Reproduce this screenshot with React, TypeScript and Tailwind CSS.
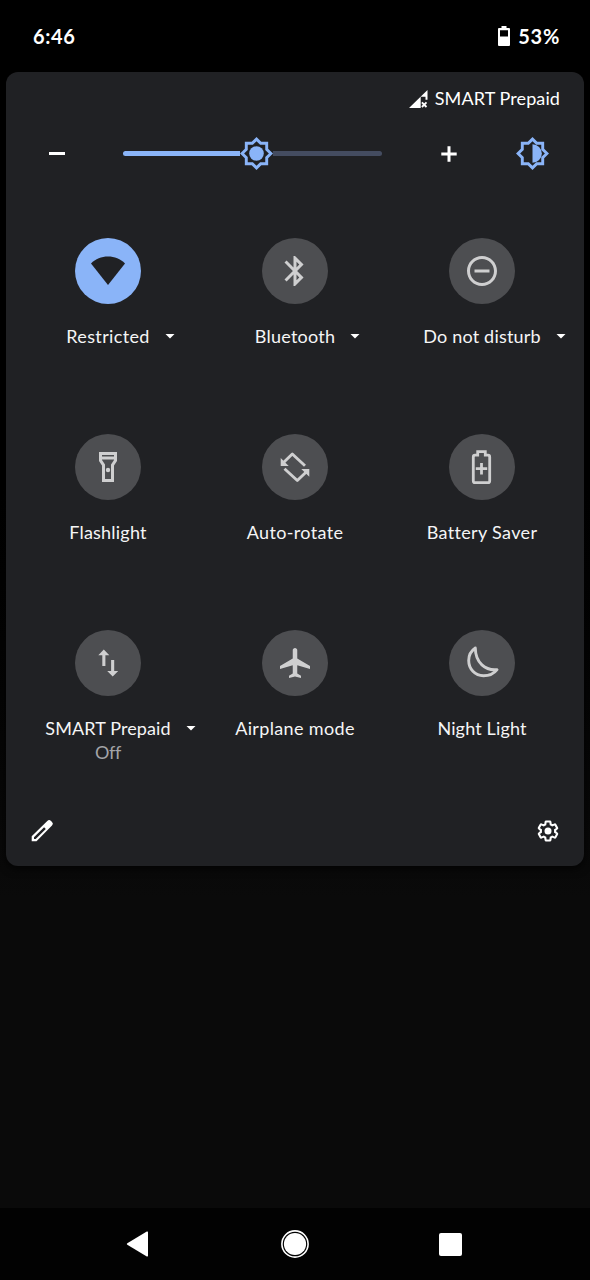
import type { ReactNode } from "react";

const SUN =
  "M20 8.69V4h-4.69L12 .69 8.69 4H4v4.69L.69 12 4 15.31V20h4.69L12 23.31 15.31 20H20v-4.69L23.31 12 20 8.69zm-2 5.79V18h-3.52L12 20.48 9.52 18H6v-3.52L3.52 12 6 9.52V6h3.52L12 3.52 14.48 6H18v3.52L20.48 12 18 14.48z";

const GEAR =
  "M19.43 12.98c.04-.32.07-.64.07-.98 0-.34-.03-.66-.07-.98l2.11-1.65c.19-.15.24-.42.12-.64l-2-3.46a.5.5 0 0 0-.61-.22l-2.49 1c-.52-.4-1.08-.73-1.69-.98l-.38-2.65A.488.488 0 0 0 14 2h-4c-.25 0-.46.18-.49.42l-.38 2.65c-.61.25-1.17.59-1.69.98l-2.49-1a.566.566 0 0 0-.18-.03c-.17 0-.34.09-.43.25l-2 3.46c-.13.22-.07.49.12.64l2.11 1.65c-.04.32-.07.65-.07.98 0 .33.03.66.07.98l-2.11 1.65c-.19.15-.24.42-.12.64l2 3.46a.5.5 0 0 0 .61.22l2.49-1c.52.4 1.08.73 1.69.98l.38 2.65c.03.24.24.42.49.42h4c.25 0 .46-.18.49-.42l.38-2.65c.61-.25 1.17-.59 1.69-.98l2.49 1c.06.02.12.03.18.03.17 0 .34-.09.43-.25l2-3.46c.12-.22.07-.49-.12-.64l-2.11-1.65z";

const material = (d: string) => (
  <path transform="translate(15 15) scale(1.5)" fillRule="evenodd" d={d} />
);

type Tile = {
  label: string;
  tracking: string;
  icon: ReactNode;
  menu?: boolean;
  active?: boolean;
  sub?: string;
};

const tiles: Tile[] = [
  {
    label: "Restricted",
    tracking: "tracking-[0.35px]",
    menu: true,
    active: true,
    icon: <path d="M33 47 16 25.5C20.5 21 26.5 18.6 33 18.6S45.5 21 50 25.5z" />,
  },
  {
    label: "Bluetooth",
    tracking: "tracking-[0.25px]",
    menu: true,
    icon: material(
      "M17.71 7.71L12 2h-1v7.59L6.41 5 5 6.41 10.59 12 5 17.59 6.41 19 11 14.41V22h1l5.71-5.71-4.3-4.29 4.3-4.29zM13 5.83l1.88 1.88L13 9.59V5.83zm1.88 10.46L13 18.17v-3.76l1.88 1.88z"
    ),
  },
  {
    label: "Do not disturb",
    tracking: "tracking-[0.2px]",
    menu: true,
    icon: material(
      "M12 2C6.48 2 2 6.48 2 12s4.48 10 10 10 10-4.48 10-10S17.52 2 12 2zm0 18c-4.41 0-8-3.59-8-8s3.59-8 8-8 8 3.59 8 8-3.59 8-8 8zM7 11h10v2H7z"
    ),
  },
  {
    label: "Flashlight",
    tracking: "tracking-[0.2px]",
    icon: (
      <>
        {material("M18 2H6v6l2 3v11h8V11l2-3V2zM16 4v1H8V4h8zM14 10.4V20h-4v-9.6L8 7.39V7h8v.39L14 10.4z")}
        <circle cx="33" cy="36" r="2.2" />
      </>
    ),
  },
  {
    label: "Auto-rotate",
    tracking: "tracking-[0.35px]",
    icon: (
      <>
        <path
          d="M43 31.800 30.300 20 21.500 28.500M22.500 34.800 35.300 46.500 44.500 37.800"
          fill="none"
          stroke="currentColor"
          strokeWidth="2.9"
          strokeLinejoin="round"
        />
        <path d="M18.7 24v7.9h8zM47.3 42.8V35h-8z" />
      </>
    ),
  },
  {
    label: "Battery Saver",
    tracking: "tracking-[0.35px]",
    icon: (
      <path
        d="M28.7 21.2v-3.5h7.6v3.5h2.7a1.7 1.7 0 0 1 1.7 1.7v24a1.7 1.7 0 0 1-1.7 1.7h-13a1.7 1.7 0 0 1-1.7-1.7v-24a1.7 1.7 0 0 1 1.7-1.7zM32.5 29v11.4M26.8 34.7h11.4"
        fill="none"
        stroke="currentColor"
        strokeWidth="2.8"
      />
    ),
  },
  {
    label: "SMART Prepaid",
    tracking: "tracking-[0.1px]",
    menu: true,
    sub: "Off",
    icon: (
      <path d="M28.8 19.6 34.3 25.2H30.4V36H27.3V25.2H23.3zM37.7 46.4 32.2 40.9H36.1V30H39.2V40.9H43.2z" />
    ),
  },
  {
    label: "Airplane mode",
    tracking: "tracking-[0.35px]",
    icon: material(
      "M22 16v-2l-8.5-5V3.5c0-.83-.67-1.5-1.5-1.5s-1.5.67-1.5 1.5V9L2 14v2l8.5-2.5V19L8 20.5V22l4-1 4 1v-1.5L13.5 19v-5.5L22 16z"
    ),
  },
  {
    label: "Night Light",
    tracking: "tracking-[0.15px]",
    icon: (
      <path
        d="M26.3 18C21.8 21 19.700 25.8 19.700 30.6C19.700 39 26 45.8 34.500 45.8C40 45.8 45 43.500 48 39.6C36.500 40.8 26.500 33 26.3 18z"
        fill="none"
        stroke="currentColor"
        strokeWidth="2.9"
        strokeLinejoin="round"
      />
    ),
  },
];

function QuickTile({ tile }: { tile: Tile }) {
  return (
    <div className="flex h-[196px] flex-col items-center">
      <svg
        viewBox="0 0 66 66"
        fill="currentColor"
        className={
          tile.active
            ? "size-[66px] rounded-full bg-[#8ab4f8] text-[#202124]"
            : "size-[66px] rounded-full bg-[#4d4e51] text-[#cfcfd0]"
        }
      >
        {tile.icon}
      </svg>
      <div className="mt-[20px] grid w-full grid-cols-[1fr_auto_1fr] items-center leading-6">
        <span />
        <span className={`whitespace-nowrap text-[18px] text-[#f5f5f6] ${tile.tracking}`}>{tile.label}</span>
        {tile.menu && (
          <svg viewBox="0 0 10 5" className="ml-[15px] mt-px h-[5px] w-[10px] fill-white">
            <path d="M.5 0h9L5 4.6z" />
          </svg>
        )}
      </div>
      {tile.sub && (
        <span className="text-[18px] leading-6 tracking-[-0.4px] text-[#a3a4a7]">{tile.sub}</span>
      )}
    </div>
  );
}

export default function App() {
  return (
    <div className="flex h-[1280px] w-[590px] flex-col overflow-hidden bg-linear-to-b from-black from-10% to-[#0a0a0a] to-70% font-['Lato',sans-serif] text-white">
      <header className="flex h-[72px] shrink-0 items-center justify-between pl-[33px] pr-[30px] text-[20px] font-bold">
        <span className="tracking-[0.6px]">6:46</span>
        <div className="flex items-center gap-[8px]">
          <svg viewBox="0 0 12 20" className="h-5 w-3 fill-white">
            <path
              fillRule="evenodd"
              d="M3.5 0h5v2H11a1 1 0 0 1 1 1v16a1 1 0 0 1-1 1H1a1 1 0 0 1-1-1V3a1 1 0 0 1 1-1h2.5zM2 4.3v6.3h8V4.3z"
            />
          </svg>
          <span className="tracking-[0.7px]">53%</span>
        </div>
      </header>

      <main className="mx-1.5 flex h-[794px] shrink-0 flex-col rounded-xl bg-[#202124] shadow-[0_3px_8px_rgba(0,0,0,0.7)]">
        <div className="flex h-[53px] items-center justify-end gap-[7px] pr-[24px] text-[18px]">
          <svg viewBox="0 0 19 18" className="h-[18px] w-[19px] fill-white">
            <path d="M18.5 0v9.8h-2V6.8h-4.8V18H0z" />
            <path d="M12.9 12.3l4.6 4.7M17.5 12.3l-4.6 4.7" stroke="white" strokeWidth="1.8" />
          </svg>
          <span className="tracking-[0.1px]">SMART Prepaid</span>
        </div>

        <div className="flex h-[57px] items-center pl-[43px]">
          <div className="h-[3px] w-4 bg-white" />
          <div className="ml-[58px] flex w-[259px] items-center">
            <div className="h-[5px] w-[117px] rounded-l-full bg-[#8ab4f8]" />
            <svg viewBox="0 0 24 24" className="-mx-px size-[35px] shrink-0 fill-[#8ab4f8]">
              <path d={SUN} />
              <circle cx="12" cy="12" r="5" />
            </svg>
            <div className="h-[5px] flex-1 rounded-r-full bg-[#444c60]" />
          </div>
          <svg viewBox="0 0 16 16" className="ml-[58.5px] size-4">
            <path d="M8 .3v15.4M.3 8h15.4" stroke="white" strokeWidth="3" />
          </svg>
          <svg viewBox="0 0 24 24" className="ml-[58.5px] size-[35px] fill-[#8ab4f8]">
            <path d={SUN} />
            <path d="M12 5.6a6.4 6.4 0 0 1 0 12.8z" />
          </svg>
        </div>

        <section className="mt-[56px] grid w-[569.5px] grid-cols-[repeat(3,187px)] pl-[8.5px]">
          {tiles.map((tile) => (
            <QuickTile key={tile.label} tile={tile} />
          ))}
        </section>

        <footer className="mt-[-7px] flex items-center justify-between pl-[24px] pr-[24px]">
          <svg viewBox="0 0 24 24" className="size-6 fill-white">
            <path
              fillRule="evenodd"
              d="M1.7 22.3v-5L17.3 1.900a2.6 2.6 0 0 1 3.7 0l1 1a2.6 2.6 0 0 1 0 3.700L6.5 22.3zM4 18.3V20h1.700L15.8 9.900l-1.700-1.700z"
            />
          </svg>
          <svg viewBox="0 0 24 24" className="size-6">
            <path
              d={GEAR}
              transform="translate(12 12) scale(.95) translate(-12 -12)"
              fill="none"
              stroke="white"
              strokeWidth="2.2"
            />
            <circle cx="12" cy="12" r="3.5" fill="white" />
          </svg>
        </footer>
      </main>

      <div className="flex-1" />

      <nav className="flex h-[72px] shrink-0 items-center bg-[#020202] pl-[126px]">
        <svg viewBox="0 0 22 26" className="h-[26px] w-[22px] fill-white">
          <path d="M20.8.6Q22 .1 22 1.2v23.6q0 1.1-1.2.6L1.3 13.7q-1.1-.7 0-1.4z" />
        </svg>
        <svg viewBox="0 0 28 28" className="ml-[133px] size-7">
          <circle cx="14" cy="14" r="13.1" fill="none" stroke="white" strokeWidth="1.6" />
          <circle cx="14" cy="14" r="11.1" fill="white" />
        </svg>
        <div className="ml-[130px] size-[23px] rounded-[2px] bg-white" />
      </nav>
    </div>
  );
}
